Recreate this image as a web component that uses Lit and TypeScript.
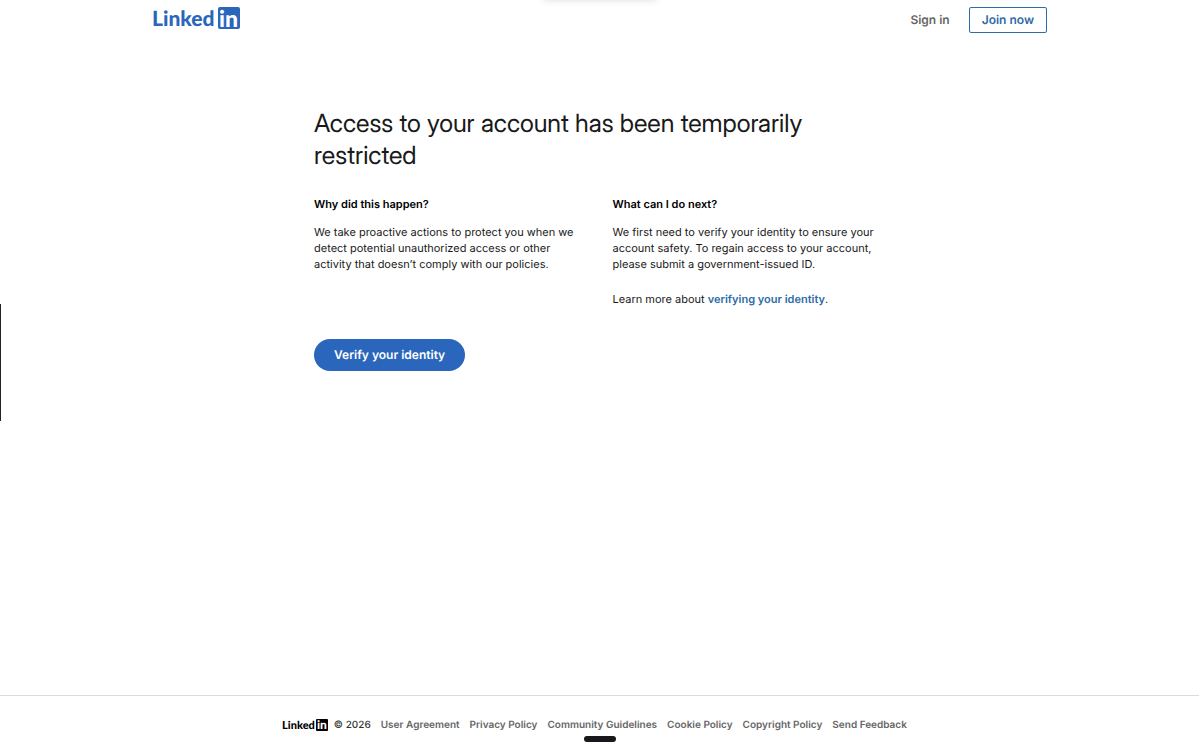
import { LitElement, html, css } from "lit";
import { customElement, property } from "lit/decorators.js";

@customElement("brand-logo")
class BrandLogo extends LitElement {
  static styles = css`
    :host {
      display: inline-flex;
      color: #2a66bc;
      --word: 21px;
      --letters: 23px;
      --tile: 22px;
      --line: 20px;
      --gap: 3px;
      --radius: 2px;
    }
    :host([small]) {
      color: #000;
      --word: 11px;
      --letters: 12px;
      --tile: 12px;
      --line: 11px;
      --gap: 1px;
      --radius: 1px;
    }
    .logo {
      display: flex;
      align-items: flex-end;
      gap: var(--gap);
      font: 900 var(--word) / var(--line) Lato, sans-serif;
    }
    .tile {
      display: flex;
      justify-content: center;
      width: var(--tile);
      height: var(--tile);
      border-radius: var(--radius);
      background: currentColor;
      font-size: var(--letters);
      line-height: var(--tile);
    }
    .in {
      color: #fff;
    }
  `;

  @property({ type: Boolean, reflect: true }) small = false;

  render() {
    return html`<span class="logo"
      ><span>Linked</span><span class="tile"><span class="in">in</span></span></span
    >`;
  }
}

@customElement("app-root")
class AppRoot extends LitElement {
  static styles = css`
    :host {
      display: flex;
      flex-direction: column;
      min-height: 100vh;
      position: relative;
      background: #fff;
      color: #191919;
      font-family: Inter, sans-serif;
      font-size: 11px;
      line-height: 16px;
      text-rendering: geometricPrecision;
    }
    a {
      text-decoration: none;
      color: inherit;
    }
    .nav {
      display: flex;
      align-items: center;
      justify-content: space-between;
      width: 100%;
      max-width: 895px;
      margin: 0 auto;
      padding-top: 7px;
    }
    .home {
      display: flex;
      align-self: flex-start;
    }
    .actions {
      display: flex;
      align-items: center;
      gap: 19px;
      font-size: 12px;
      font-weight: 600;
    }
    .signin {
      color: #666;
    }
    .join {
      box-sizing: border-box;
      padding: 4px 12px;
      border: 1px solid #2d6ca8;
      border-radius: 2px;
      color: #2d6ca8;
    }
    .main {
      flex: 1;
      width: 100%;
      max-width: 571px;
      margin: 0 auto;
      padding-top: 75px;
    }
    h1 {
      max-width: 520px;
      margin: 0 0 24px;
      font-size: 25px;
      line-height: 32px;
      font-weight: 400;
      font-family: "Inter Display", Inter, sans-serif;
      font-variation-settings: "opsz" 32;
    }
    .columns {
      display: grid;
      grid-template-columns: 1fr 1fr;
      gap: 26px;
    }
    h2 {
      margin: 0 0 12px;
      font-size: 11px;
      line-height: 16px;
      font-weight: 600;
      color: #000;
    }
    p {
      margin: 0 0 19px;
    }
    .link {
      color: #2d6ca8;
      font-weight: 600;
    }
    .verify {
      margin: 13px 0 0;
      padding: 8px 20px;
      border: 0;
      border-radius: 16px;
      background: #2a66bc;
      color: #fff;
      font: 600 12px/16px Inter, sans-serif;
      text-rendering: inherit;
    }
    .footer {
      display: flex;
      justify-content: center;
      gap: 10px;
      padding: 21px 10px 19px 0;
      border-top: 1px solid #dcdcdc;
      color: #666;
      font-size: 10px;
      font-weight: 600;
    }
    .copy {
      display: flex;
      align-items: center;
      gap: 6px;
      color: #333;
      font-weight: 500;
    }
    .edge {
      position: absolute;
      left: 0;
      top: 304px;
      width: 1px;
      height: 117px;
      background: #222;
    }
    .handle {
      position: absolute;
      left: 50%;
      bottom: 10px;
      width: 32px;
      height: 6px;
      margin-left: -16px;
      border-radius: 3px;
      background: #17171c;
    }
    .shade {
      position: absolute;
      left: 50%;
      top: -11px;
      width: 116px;
      height: 10px;
      margin-left: -58px;
      border-radius: 5px;
      box-shadow: 0 0 8px rgba(0, 0, 0, 0.18);
    }
  `;

  private links = [
    "User Agreement",
    "Privacy Policy",
    "Community Guidelines",
    "Cookie Policy",
    "Copyright Policy",
    "Send Feedback",
  ];

  render() {
    return html`
      <header class="nav">
        <a class="home" href="#"><brand-logo></brand-logo></a>
        <nav class="actions">
          <a class="signin" href="#">Sign in</a>
          <a class="join" href="#">Join now</a>
        </nav>
      </header>
      <main class="main">
        <h1>Access to your account has been temporarily restricted</h1>
        <div class="columns">
          <section>
            <h2>Why did this happen?</h2>
            <p>
              We take proactive actions to protect you when we detect potential
              unauthorized access or other activity that doesn’t comply with our
              policies.
            </p>
          </section>
          <section>
            <h2>What can I do next?</h2>
            <p>
              We first need to verify your identity to ensure your account
              safety. To regain access to your account, please submit a
              government-issued ID.
            </p>
            <p>
              Learn more about
              <a class="link" href="#">verifying your identity</a>.
            </p>
          </section>
        </div>
        <button class="verify" type="button">Verify your identity</button>
      </main>
      <footer class="footer">
        <span class="copy"><brand-logo small></brand-logo>© 2026</span>
        ${this.links.map((label) => html`<a href="#">${label}</a>`)}
      </footer>
      <div class="shade"></div>
      <div class="edge"></div>
      <div class="handle"></div>
    `;
  }
}
